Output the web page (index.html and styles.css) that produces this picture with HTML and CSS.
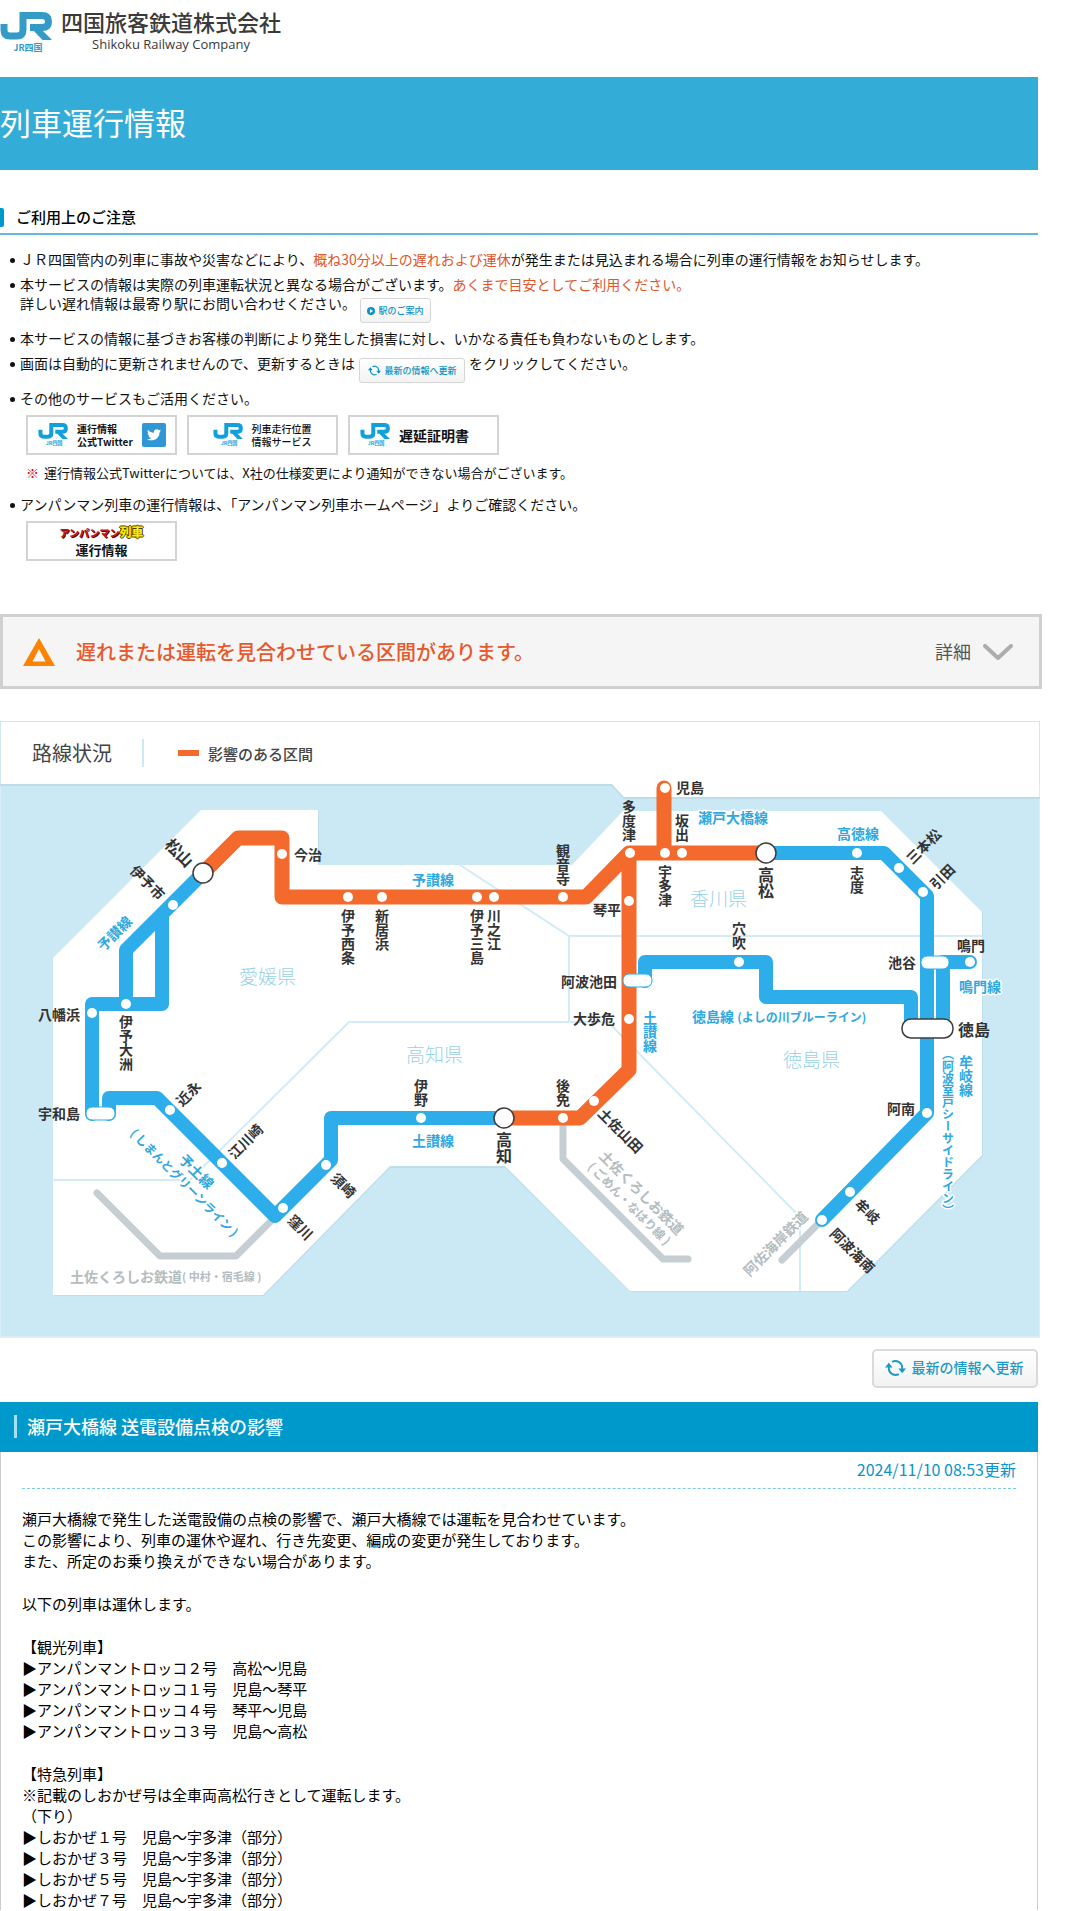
FILE: index.html
```html
<!DOCTYPE html>
<html lang="ja">
<head>
<meta charset="utf-8">
<meta name="viewport" content="width=device-width, initial-scale=1">
<title>列車運行情報 | 四国旅客鉄道株式会社</title>
<link rel="stylesheet" href="styles.css">
</head>
<body>
<svg class="defs" width="0" height="0" aria-hidden="true">
  <symbol id="jr" viewBox="0 0 52 42">
    <path d="M4 12V18Q4 24 10 24H17Q23 24 23 18V3.500H42Q48.500 3.500 48.500 9.500T42 15.500H30" fill="none" stroke="currentColor" stroke-width="7"/>
    <path d="M30 15H39L52 28H42.500Z" fill="currentColor"/>
    <text x="28" y="39" text-anchor="middle" class="jr-name">JR四国</text>
  </symbol>
  <symbol id="reload" viewBox="0 0 22 18">
    <path d="M4 7V9.500A7 7 0 0 0 14.500 15.400M18 11V8.500A7 7 0 0 0 7.500 2.600" fill="none" stroke="currentColor" stroke-width="2"/>
    <path d="M0 8.500L4 3.500L8 8.500ZM14 9.500L18 14.500L22 9.500Z" fill="currentColor"/>
  </symbol>
</svg>

<div class="page">
  <header class="site-header">
    <a class="brand" href="#">
      <svg class="brand-mark" role="img" aria-label="JR四国"><use href="#jr"/></svg>
      <span class="brand-text">
        <span class="brand-ja">四国旅客鉄道株式会社</span>
        <span class="brand-en">Shikoku Railway Company</span>
      </span>
    </a>
  </header>

  <div class="title-band"><h1 class="title">列車運行情報</h1></div>

  <section class="notice">
    <h2 class="notice-title">ご利用上のご注意</h2>
    <ul class="notes">
      <li class="note"><div>ＪＲ四国管内の列車に事故や災害などにより、<em class="hot">概ね30分以上の遅れおよび運休</em>が発生または見込まれる場合に列車の運行情報をお知らせします。</div></li>
      <li class="note"><div>本サービスの情報は実際の列車運転状況と異なる場合がございます。<em class="hot">あくまで目安としてご利用ください。</em>
        <div class="inline-row">詳しい遅れ情報は最寄り駅にお問い合わせください。
          <a class="mini-button" href="#"><svg class="mini-arrow" viewBox="0 0 8 8" aria-hidden="true"><circle cx="4" cy="4" r="4" fill="currentColor"/><path d="M3 2L6 4L3 6Z" fill="#fff"/></svg>駅のご案内</a>
        </div></div></li>
      <li class="note"><div>本サービスの情報に基づきお客様の判断により発生した損害に対し、いかなる責任も負わないものとします。</div></li>
      <li class="note"><div class="inline-row">画面は自動的に更新されませんので、更新するときは
        <button class="mini-button wide" type="button"><svg class="mini-reload" aria-hidden="true"><use href="#reload"/></svg>最新の情報へ更新</button>
        をクリックしてください。</div></li>
      <li class="note"><div>その他のサービスもご活用ください。
        <div class="banners">
          <a class="banner" href="#"><svg class="banner-jr" aria-hidden="true"><use href="#jr"/></svg><span>運行情報<br>公式Twitter</span>
            <svg class="bird" viewBox="0 0 24 24" aria-hidden="true"><rect width="24" height="24" rx="2" fill="#3097d6"/><path d="M19 7.500c-.5.300-1 .4-1.600.5.600-.4 1-.9 1.200-1.600-.5.300-1.100.6-1.800.7a2.900 2.900 0 0 0-4.900 2.600C9.500 9.600 7.400 8.500 6 6.700c-.7 1.300-.4 2.900.9 3.800-.5 0-.9-.1-1.300-.3 0 1.400 1 2.500 2.300 2.800-.4.100-.8.100-1.300 0 .4 1.200 1.400 2 2.700 2A5.900 5.900 0 0 1 5 16.200c4.900 2.900 12.600.4 12.600-7.200.6-.4 1-.9 1.400-1.500z" fill="#fff"/></svg></a>
          <a class="banner centered" href="#"><svg class="banner-jr" aria-hidden="true"><use href="#jr"/></svg><span>列車走行位置<br>情報サービス</span></a>
          <a class="banner large" href="#"><svg class="banner-jr" aria-hidden="true"><use href="#jr"/></svg><span>遅延証明書</span></a>
        </div>
        <p class="remark"><span class="mark">※</span>運行情報公式Twitterについては、X社の仕様変更により通知ができない場合がございます。</p></div></li>
      <li class="note"><div>アンパンマン列車の運行情報は、「アンパンマン列車ホームページ」よりご確認ください。
        <div class="banners">
          <a class="banner stacked" href="#"><span class="anpan"><span class="anpan-red">アンパンマン</span><span class="anpan-yellow">列車</span></span><span class="anpan-info">運行情報</span></a>
        </div></div></li>
    </ul>
  </section>

  <button class="alert" type="button" aria-expanded="false">
    <svg class="alert-icon" viewBox="0 0 32 28" aria-hidden="true"><path d="M16 0L32 28H0ZM16 11L9.500 23.500H22.500Z" fill="#ff8200" fill-rule="evenodd"/></svg>
    <span class="alert-text">遅れまたは運転を見合わせている区間があります。</span>
    <span class="alert-more">詳細</span>
    <svg class="chevron" viewBox="0 0 30 16" aria-hidden="true"><path d="M2 2L15 14L28 2" fill="none" stroke="#adadad" stroke-width="4" stroke-linecap="round" stroke-linejoin="round"/></svg>
  </button>

  <figure class="map">
    <figcaption class="map-head">
      <span class="map-title">路線状況</span>
      <span class="legend">影響のある区間</span>
    </figcaption>
    <svg class="map-art" viewBox="0 785 1040 554" role="img" aria-label="四国の路線図">
      <rect y="785" width="1040" height="554" fill="#d9eef8"/>
      <rect x="1" y="785" width="1038" height="552" fill="#cbe8f5"/>
      <path class="shade" d="M0 786H612L624 799H1040" />
      <path d="M611 784L624 798H1039V784Z" fill="#fff"/>
      <path class="coast" d="M201 812H319V867H572L624 813H881L983 914V1157L848 1293H630L505 1169H390L264 1297H54Z"/>
      <path d="M201 811H318V866H572L623 812H881L982 913V1156L847 1292H630L505 1167H390L263 1296H53V959Z" fill="#fff"/>
      <g class="border">
        <path d="M460 866L569 937H982M569 937V1023M53 1181H190L349 1023H608L800 1218V1292"/>
      </g>
      <g class="other">
        <path d="M97 1194L160 1257H236L276 1217"/>
        <path d="M563 1122V1160L663 1260H688"/>
        <path d="M822 1221L782 1261"/>
      </g>
      <g class="normal">
        <path d="M203 874L126 951V1005M162 916V1005H92V1115"/>
        <path d="M109 1115V1099H157L275 1217L331 1161V1119H504"/>
        <path d="M645 982V963H766V998H911V1029"/>
        <path d="M766 854H884L927 897V1114L822 1221"/>
        <path d="M943 1029V963H970"/>
      </g>
      <g class="affected">
        <path d="M203 874L238 839H282V898H586L629 854H766M629 854V1071L580 1119H504M664 789V854"/>
      </g>
      <path d="M935 971V1018" stroke="#fff" stroke-width="2"/>
      <g class="stop">
        <circle cx="282" cy="855" r="5"/><circle cx="348" cy="898" r="5"/><circle cx="382" cy="898" r="5"/><circle cx="477" cy="898" r="5"/><circle cx="494" cy="898" r="5"/><circle cx="563" cy="898" r="5"/>
        <circle cx="630" cy="854" r="5"/><circle cx="665" cy="854" r="5"/><circle cx="682" cy="854" r="5"/><circle cx="665" cy="789" r="5"/>
        <circle cx="857" cy="854" r="5"/><circle cx="899" cy="869" r="5"/><circle cx="923" cy="893" r="5"/><circle cx="970" cy="963" r="5"/><circle cx="739" cy="963" r="5"/>
        <circle cx="629" cy="902" r="5"/><circle cx="629" cy="1020" r="5"/><circle cx="594" cy="1102" r="5"/><circle cx="563" cy="1119" r="5"/><circle cx="421" cy="1119" r="5"/>
        <circle cx="326" cy="1166" r="5"/><circle cx="283" cy="1209" r="5"/><circle cx="222" cy="1164" r="5"/><circle cx="170" cy="1111" r="5"/>
        <circle cx="92" cy="1014" r="5"/><circle cx="126" cy="1005" r="5"/><circle cx="173" cy="906" r="5"/>
        <circle cx="927" cy="1114" r="5"/><circle cx="850" cy="1193" r="5"/><circle cx="822" cy="1221" r="5"/>
      </g>
      <g class="hub">
        <circle cx="203" cy="874" r="10"/><circle cx="766" cy="854" r="10"/><circle cx="504" cy="1119" r="10"/>
        <rect x="902" y="1020" width="51" height="19" rx="9"/>
      </g>
      <g class="joint">
        <rect x="86" y="1108" width="29" height="13" rx="6"/><rect x="623" y="975" width="29" height="13" rx="6"/><rect x="921" y="957" width="28" height="13" rx="6"/>
      </g>
      <g class="pref">
        <text x="239" y="976">愛媛県</text><text x="406" y="1054">高知県</text><text x="690" y="898">香川県</text><text x="783" y="1059">徳島県</text>
      </g>
      <g class="name">
        <text x="294" y="855">今治</text><text x="38" y="1015">八幡浜</text><text x="38" y="1114">宇和島</text><text x="561" y="982">阿波池田</text><text x="573" y="1019">大歩危</text><text x="593" y="910">琴平</text><text x="676" y="788">児島</text><text x="888" y="963">池谷</text><text x="957" y="946">鳴門</text><text x="887" y="1109">阿南</text>
        <text class="big" x="958" y="1030">徳島</text>
        <g class="vert">
          <text x="629" y="801">多度津</text><text x="682" y="815">坂出</text><text x="563" y="845">観音寺</text><text x="665" y="866">宇多津</text><text x="348" y="910">伊予西条</text><text x="382" y="910">新居浜</text><text x="477" y="910">伊予三島</text><text x="494" y="910">川之江</text><text x="857" y="867">志度</text><text x="739" y="923">穴吹</text><text x="126" y="1016">伊予大洲</text><text x="421" y="1080">伊野</text><text x="563" y="1080">後免</text>
          <text class="big" x="766" y="868">高松</text><text class="big" x="504" y="1133">高知</text>
        </g>
        <g class="mid">
          <text class="big" transform="translate(180 853) rotate(45)">松山</text>
          <text transform="translate(148 883) rotate(45)">伊予市</text>
          <text transform="translate(188 1094) rotate(-45)">近永</text>
          <text transform="translate(245 1142) rotate(-45)">江川崎</text>
          <text transform="translate(344 1186) rotate(45)">須崎</text>
          <text transform="translate(301 1228) rotate(45)">窪川</text>
          <text transform="translate(621 1131) rotate(45)">土佐山田</text>
          <text transform="translate(923 847) rotate(-45)">三本松</text>
          <text transform="translate(942 877) rotate(-45)">引田</text>
          <text transform="translate(868 1212) rotate(45)">牟岐</text>
          <text transform="translate(853 1251) rotate(45)">阿波海南</text>
        </g>
      </g>
      <g class="line-name">
        <text x="412" y="880">予讃線</text><text x="698" y="818">瀬戸大橋線</text><text x="837" y="834">高徳線</text><text x="959" y="987">鳴門線</text><text x="692" y="1017">徳島線 <tspan class="sub">(よしの川ブルーライン)</tspan></text><text x="412" y="1141">土讃線</text>
        <g class="vert"><text x="650" y="1012">土讃線</text><text x="966" y="1056">牟岐線</text><text class="sub" x="948" y="1049">（阿波室戸シーサイドライン）</text></g>
        <g class="mid">
          <text transform="translate(114 934) rotate(-45)">予讃線</text>
          <text transform="translate(197 1172) rotate(45)">予土線</text>
          <text class="sub" transform="translate(185 1183) rotate(45)">( しまんとグリーンライン )</text>
        </g>
      </g>
      <g class="other-name">
        <text x="70" y="1277">土佐くろしお鉄道<tspan class="small">( 中村・宿毛線 )</tspan></text>
        <g class="mid">
          <text transform="translate(642 1193) rotate(45)">土佐くろしお鉄道</text>
          <text class="sub" transform="translate(630 1204) rotate(45)">( ごめん・なはり線 )</text>
          <text transform="translate(775 1244) rotate(-45)">阿佐海岸鉄道</text>
        </g>
      </g>
    </svg>
  </figure>

  <div class="actions">
    <button class="refresh" type="button"><svg class="refresh-icon" aria-hidden="true"><use href="#reload"/></svg>最新の情報へ更新</button>
  </div>

  <article class="event">
    <h2 class="event-title">瀬戸大橋線 送電設備点検の影響</h2>
    <div class="event-body">
      <p class="updated"><time datetime="2024-11-10T08:53">2024/11/10 08:53</time>更新</p>
      <p class="para">瀬戸大橋線で発生した送電設備の点検の影響で、瀬戸大橋線では運転を見合わせています。<br>この影響により、列車の運休や遅れ、行き先変更、編成の変更が発生しております。<br>また、所定のお乗り換えができない場合があります。</p>
      <p class="para">以下の列車は運休します。</p>
      <p class="para">【観光列車】<br>▶アンパンマントロッコ２号　高松～児島<br>▶アンパンマントロッコ１号　児島～琴平<br>▶アンパンマントロッコ４号　琴平～児島<br>▶アンパンマントロッコ３号　児島～高松</p>
      <p class="para">【特急列車】<br>※記載のしおかぜ号は全車両高松行きとして運転します。<br>（下り）<br>▶しおかぜ１号　児島～宇多津（部分）<br>▶しおかぜ３号　児島～宇多津（部分）<br>▶しおかぜ５号　児島～宇多津（部分）<br>▶しおかぜ７号　児島～宇多津（部分）</p>
    </div>
  </article>
</div>
</body>
</html>
```
FILE: styles.css
```css
* { box-sizing: border-box; }

body {
  margin: 0;
  background: #fff;
  color: #111;
  font-family: "Noto Sans CJK JP", sans-serif;
  font-size: 14px;
  line-height: 19px;
}

h1, h2, p, ul, figure { margin: 0; padding: 0; font-weight: 400; }
a { color: inherit; text-decoration: none; }
button { margin: 0; font: inherit; cursor: pointer; }
svg { display: block; flex: none; }
.defs { position: absolute; }

.page { padding-right: 38px; }

/* Header */
.site-header { display: flex; padding: 8px 0 23px; }
.brand { display: flex; gap: 9px; align-items: flex-end; color: #3a3a3a; }
.brand-mark { width: 52px; height: 42px; color: #349ac6; }
.jr-name { font-size: 9px; font-weight: 700; fill: currentColor; }
.brand-text { display: flex; flex-direction: column; align-items: center; }
.brand-ja { font-size: 22px; line-height: 26px; font-weight: 500; }
.brand-en { font-family: "Open Sans", sans-serif; font-size: 13px; line-height: 20px; font-weight: 500; }

.title-band { margin-right: 4px; padding: 22px 0 26px; background: #34acd8; }
.title { color: #fff; font-size: 31px; line-height: 45px; }

/* Notes */
.notice-title {
  display: flex;
  align-items: center;
  gap: 12px;
  margin: 31px 4px 15px 0;
  border-bottom: 2px solid #5fb9de;
  color: #000;
  font-size: 15px;
  line-height: 32px;
  font-weight: 500;
}
.notice-title::before { content: ""; width: 4px; height: 19px; border-radius: 0 2px 2px 0; background: #09c; }

.notes { display: flex; flex-direction: column; gap: 6px; padding-left: 10px; list-style: none; }
.note { display: flex; gap: 5px; }
.note::before { content: ""; flex: none; width: 5px; height: 5px; margin-top: 8px; border-radius: 50%; background: #111; }
.hot { color: #e0562b; font-style: normal; }
.inline-row { display: flex; align-items: flex-start; gap: 4px; }

.mini-button {
  display: flex;
  align-items: center;
  justify-content: center;
  gap: 3px;
  width: 71px;
  height: 25px;
  margin-top: 4px;
  padding: 0;
  border: 1px solid #d6d6d6;
  border-radius: 3px;
  background: linear-gradient(#fff, #f3f3f3);
  color: #0c94c4;
  font-size: 9px;
  font-weight: 500;
}
.mini-button.wide { gap: 4px; width: 106px; }
.mini-arrow { width: 8px; height: 8px; }
.mini-reload { width: 13px; height: 11px; }

.banners { display: flex; gap: 10px; margin: 7px 0 0 6px; }
.banner {
  display: flex;
  align-items: center;
  gap: 9px;
  width: 151px;
  height: 40px;
  padding: 0 11px 0 10px;
  border: 2px solid #d3d3d3;
  font-size: 10px;
  line-height: 13px;
  font-weight: 700;
  white-space: nowrap;
}
.banner.centered { justify-content: center; font-weight: 500; }
.banner.large { font-size: 14px; }
.banner.stacked { flex-direction: column; justify-content: center; gap: 2px; padding: 0; }
.banner-jr { width: 30px; height: 24px; color: #12a0dc; }
.bird { width: 24px; height: 24px; margin-left: auto; }
.anpan { font-size: 12px; line-height: 14px; font-weight: 900; }
.anpan-red { font-size: 10px; color: #c4151c; text-shadow: 1px 1px 0 #400; }
.anpan-yellow { color: #ffe800; text-shadow: 1px 0 #443c00, -1px 0 #443c00, 0 1px #443c00, 0 -1px #443c00; }
.anpan-info { font-size: 13px; line-height: 15px; }
.remark { margin: 8px 0 7px; padding-left: 6px; font-size: 13px; }
.mark { margin-right: 5px; color: #e60012; }

/* Alert bar */
.alert {
  display: flex;
  align-items: center;
  width: 100%;
  height: 75px;
  margin-top: 53px;
  padding: 0 26px 0 20px;
  border: 3px solid #d0d0d0;
  border-radius: 0;
  background: #f5f5f5;
  text-align: left;
}
.alert-icon { width: 32px; height: 28px; }
.alert-text { flex: 1; margin-left: 21px; color: #e5592c; font-size: 20px; line-height: 30px; font-weight: 500; }
.alert-more { margin-right: 12px; color: #555; font-size: 18px; }
.chevron { width: 30px; height: 16px; }

/* Route map */
.map { margin: 32px 2px 0 0; }
.map-head {
  display: flex;
  align-items: center;
  height: 63px;
  padding-left: 31px;
  border: 1px solid #d0e9f4;
  border-bottom: 0;
  color: #444;
}
.map-title { padding-right: 30px; border-right: 2px solid #cde8f3; font-size: 20px; line-height: 28px; }
.legend { display: flex; align-items: center; gap: 9px; margin-left: 34px; font-size: 15px; font-weight: 500; }
.legend::before { content: ""; width: 21px; height: 6px; background: #f46a2d; }

.map-art { width: 100%; height: auto; overflow: visible; }
.map-art text { dominant-baseline: central; }
.shade { fill: none; stroke: #bddde9; stroke-width: 2; }
.coast { fill: #bddfeb; }
.border { fill: none; stroke: #d3eaf7; stroke-width: 2; }
.other, .normal, .affected { fill: none; stroke-linecap: round; stroke-linejoin: round; }
.other { stroke: #c5ced2; stroke-width: 7; }
.normal { stroke: #2daeea; stroke-width: 14; }
.affected { stroke: #f46a2d; stroke-width: 15; }
.stop { fill: #fff; }
.hub { fill: #fff; stroke: #3c3c3c; stroke-width: 1.5; }
.joint { fill: #fff; stroke: #2daeea; stroke-width: 1; }
.pref { fill: #98d2e8; font-size: 19px; font-weight: 300; }
.name { fill: #333; font-size: 14px; font-weight: 700; }
.big { font-size: 16px; }
.line-name { fill: #2ea8e0; stroke: #fff; stroke-width: 3; stroke-linejoin: round; paint-order: stroke; font-size: 14px; font-weight: 700; }
.other-name { fill: #b3bcc0; stroke: #fff; stroke-width: 3; stroke-linejoin: round; paint-order: stroke; font-size: 14px; font-weight: 700; }
.sub { font-size: 12px; }
.small { font-size: 11px; }
.vert { writing-mode: vertical-rl; }
.mid { text-anchor: middle; }

/* Refresh */
.actions { display: flex; justify-content: flex-end; margin: 11px 4px 14px 0; }
.refresh {
  display: flex;
  align-items: center;
  justify-content: center;
  gap: 6px;
  width: 166px;
  height: 39px;
  padding: 0 2px 2px 0;
  border: 2px solid #dadada;
  border-radius: 5px;
  background: linear-gradient(#fff, #f2f2f2);
  color: #1b9ac7;
  font-weight: 500;
}
.refresh-icon { width: 21px; height: 18px; }

/* Event */
.event { margin-right: 4px; }
.event-title {
  display: flex;
  align-items: center;
  gap: 10px;
  height: 50px;
  padding: 0 14px 2px;
  background: #09c;
  color: #fff;
  font-size: 18px;
  font-weight: 500;
}
.event-title::before { content: ""; width: 3px; height: 23px; background: #a6e0f5; }
.event-body { padding: 0 21px; border: 1px solid #ccc; border-width: 0 1px; }
.updated {
  height: 37px;
  margin-bottom: 19px;
  border-bottom: 1px dashed #7cc8e4;
  color: #0c94cc;
  font-size: 16px;
  line-height: 34px;
  text-align: right;
}
.para { font-size: 15px; line-height: 21px; color: #000; }
.para + .para { margin-top: 22px; }
```
